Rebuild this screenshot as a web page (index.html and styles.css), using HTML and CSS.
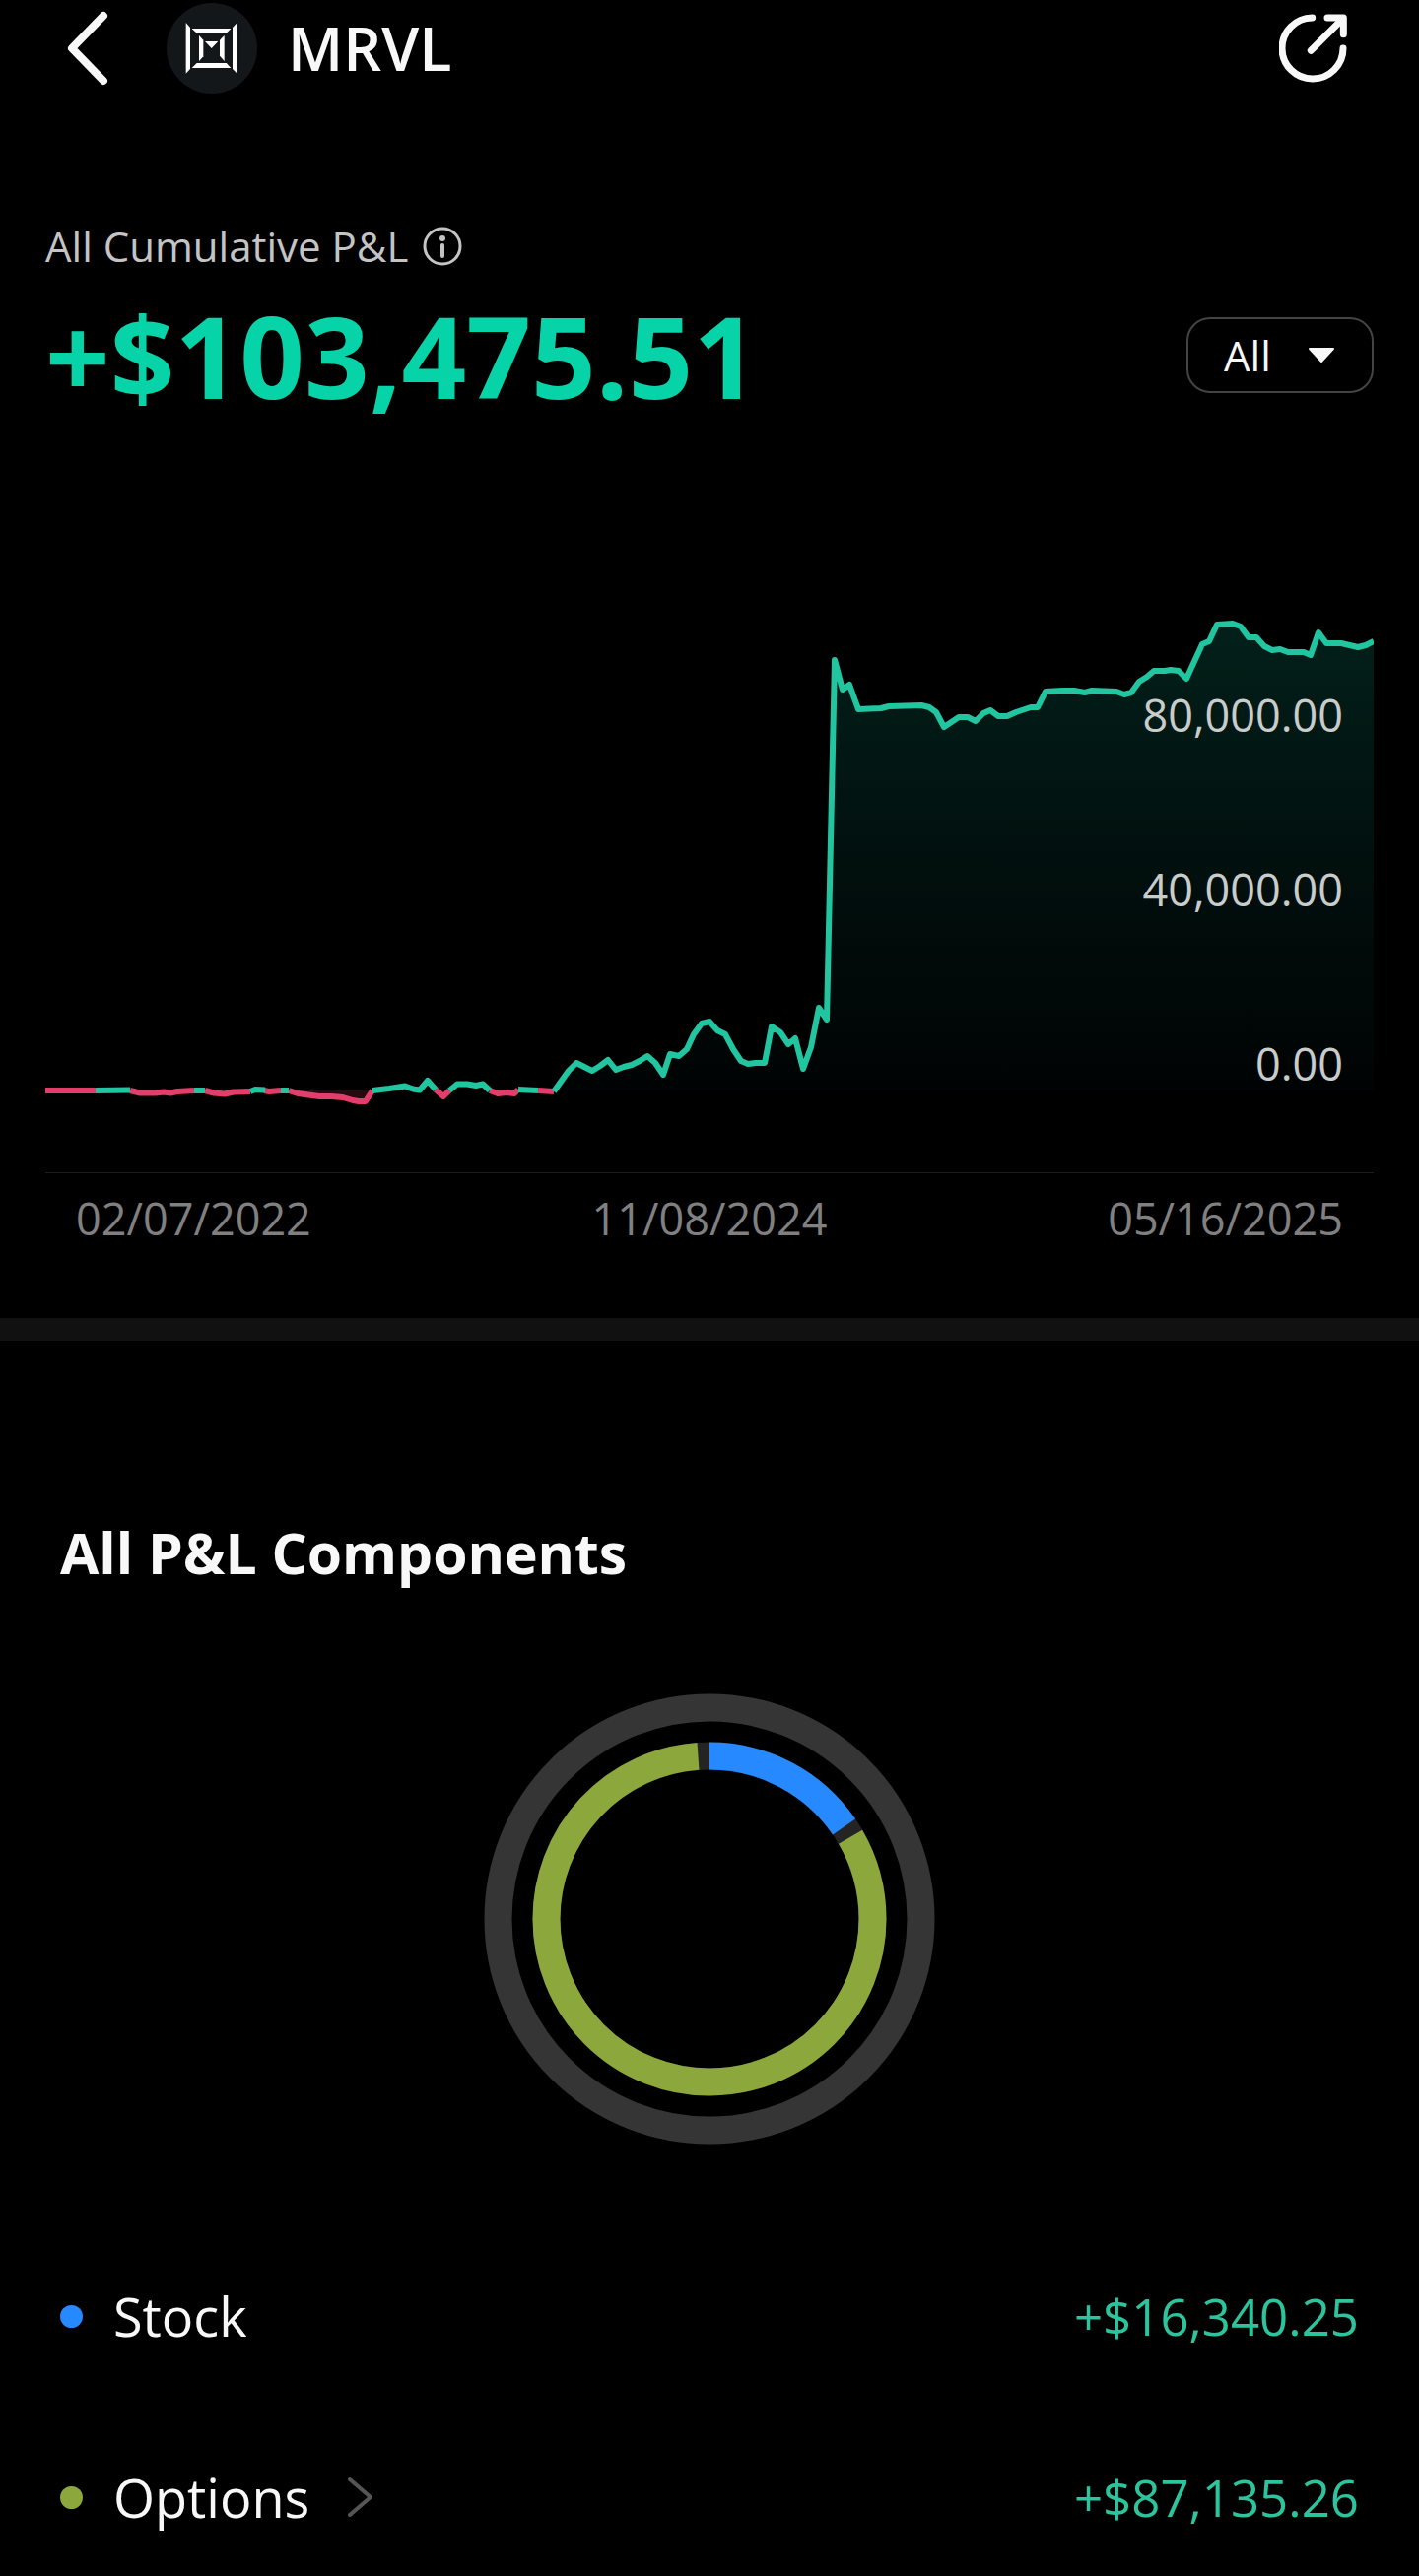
FILE: index.html
```html
<!DOCTYPE html>
<html lang="en">
<head>
    <meta charset="UTF-8">
    <meta name="viewport" content="width=device-width, initial-scale=1">
    <title>MRVL</title>
    <link rel="stylesheet" href="styles.css">
</head>
<body>
<header class="header">
    <button class="icon-btn back-btn" type="button" aria-label="Back">
        <svg class="back-icon" viewBox="0 0 42 76">
            <path d="M37 5 L5 38 L37 71"/>
        </svg>
    </button>
    <svg class="logo" viewBox="0 0 276 276" aria-hidden="true">
        <circle cx="138" cy="138" r="138" fill="#14171a"/>
        <g fill="#fff">
            <polygon points="59,60 72,75 72,201 59,215"/>
            <polygon points="215,60 201,75 201,201 215,215"/>
            <polygon points="77,78 196,78 182,92 92,92"/>
            <polygon points="92,183 182,183 196,198 77,198"/>
            <polygon points="99,99 112,113 112,163 99,177"/>
            <polygon points="176,99 162,113 162,161 176,177"/>
            <polygon points="117,117 157,117 137,138"/>
        </g>
    </svg>
    <h1 class="symbol">MRVL</h1>
    <button class="icon-btn share-btn" type="button" aria-label="Share">
        <svg class="share-icon" viewBox="0 0 210 210">
            <path d="M101 12 A93 93 0 1 0 195 105"/>
            <path d="M97 112 L190 19"/>
            <path d="M147 12 H196 V62"/>
        </svg>
    </button>
</header>

<main>
    <section class="summary">
        <div class="summary-label">
            <span>All Cumulative P&amp;L</span>
            <button class="icon-btn" type="button" aria-label="About cumulative P&amp;L">
                <svg class="info-icon" viewBox="0 0 40 40">
                    <circle cx="20" cy="20" r="18" fill="none" stroke="#c4c4c4" stroke-width="3"/>
                    <circle cx="20" cy="12" r="3" fill="#c4c4c4"/>
                    <path d="M20 19 V30" stroke="#c4c4c4" stroke-width="4" stroke-linecap="round"/>
                </svg>
            </button>
        </div>
        <div class="summary-row">
            <p class="total">+$103,475.51</p>
            <div class="range">
                <select class="range-select" aria-label="Range">
                    <option>All</option>
                </select>
                <svg class="range-arrow" viewBox="0 0 28 16" aria-hidden="true">
                    <path d="M2 1 H26 L14 14 Z"/>
                </svg>
            </div>
        </div>

        <div class="chart">
            <svg class="chart-svg" viewBox="0 0 1348 570" role="img" aria-label="Cumulative P&amp;L over time">
                <defs>
                    <linearGradient id="gain-fill" gradientUnits="userSpaceOnUse" x1="0" y1="12" x2="0" y2="487">
                        <stop offset="0" stop-color="#0fc79c" stop-opacity=".16"/>
                        <stop offset="1" stop-color="#0fa0a0" stop-opacity=".02"/>
                    </linearGradient>
                </defs>
                <!--area-->
                <path fill="url(#gain-fill)" d="M516 487 L531 467 539 459 547 463 555 467 571 456 579 466 595 461 611 452 619 459 627 471 634 450 643 452 651 445 658 430 666 419 674 417 682 426 690 430 698 445 706 457 713 460 730 459 737 422 746 428 754 440 761 434 769 465 777 443 785 403 793 415 801 50 809 80 816 75 825 100 848 99 856 97 889 96 897 98 904 103 912 118 927 108 936 108 944 112 952 104 959 101 967 107 976 107 985 103 1000 98 1007 98 1015 82 1055 83 1062 81 1087 82 1095 85 1102 83 1110 72 1118 67 1125 61 1150 61 1158 69 1174 34 1181 31 1189 14 1205 13 1213 16 1221 27 1229 27 1237 36 1245 40 1253 39 1261 42 1277 42 1284 45 1292 22 1300 33 1315 33 1332 37 1340 35 1348 31 V487 Z"/>
                <polygon fill="#e23e6b" fill-opacity=".16" points="256,487 332,487 325,498 318,498 302,494 278,493 256,490"/>
                <!--losses-->
                <g class="line line-loss">
                    <path d="M0 487 H51"/>
                    <path d="M86 487 L96 489.5 H112 L120 488.5 127 489.5 134 488 151 487"/>
                    <path d="M162 487 L171 489.5 182 490.5 191 488.5 208 488"/>
                    <path d="M222 487 L227 488 239 487"/>
                    <path d="M247 487 L256 490 278 493 290 493 302 494 312 497 318 498 325 498 332 487"/>
                    <path d="M396 486 L404 493 410 487"/>
                    <path d="M451 487 L459 490 468 489 476 490 480 486"/>
                    <path d="M500 487 L516 488"/>
                </g>
                <!--gains-->
                <g class="line line-gain">
                    <path d="M51 487 L86 486.5"/>
                    <path d="M151 487 H162"/>
                    <path d="M208 488 L213 486 223 486.5"/>
                    <path d="M239 487 H247"/>
                    <path d="M332 487 L349 485 365 482.5 373 485.5 380 486.5 388 477 396 486"/>
                    <path d="M410 487 L418 480.5 H428 L437 482 444 480.5 451 487"/>
                    <path d="M480 486 L500 487"/>
                    <path d="M516 488 L531 467 539 459 547 463 555 467 563 462 571 456 579 466 587 463 595 461 603 457 611 452 619 459 627 471 634 450 643 452 651 445 658 430 666 419 674 417 682 426 690 430 698 445 706 457 713 460 721 459 730 459 737 422 746 428 754 440 761 434 769 465 777 443 785 403 793 415 801 50 809 80 816 75 825 100 848 99 856 97 889 96 897 98 904 103 912 118 927 108 936 108 944 112 952 104 959 101 967 107 976 107 985 103 1000 98 1007 98 1015 82 1032 81 1044 81 1055 83 1062 81 1087 82 1095 85 1102 83 1110 72 1118 67 1125 61 1136 61 1142 60 1150 61 1158 69 1174 34 1181 31 1189 14 1205 13 1213 16 1221 27 1229 27 1237 36 1245 40 1253 39 1261 42 1277 42 1284 45 1292 22 1300 33 1315 33 1332 37 1340 35 1348 31"/>
                </g>
            </svg>
            <ul class="y-axis">
                <li>80,000.00</li>
                <li>40,000.00</li>
                <li>0.00</li>
            </ul>
            <ul class="x-axis">
                <li>02/07/2022</li>
                <li>11/08/2024</li>
                <li>05/16/2025</li>
            </ul>
        </div>
    </section>

    <section class="components">
        <h2 class="components-title">All P&amp;L Components</h2>
        <svg class="donut" viewBox="0 0 458 458" role="img" aria-label="Stock and options share of P&amp;L">
            <g transform="rotate(-90 229 229)" fill="none" stroke-width="28">
                <circle cx="229" cy="229" r="214.5" stroke="#353535"/>
                <circle cx="229" cy="229" r="165.5" stroke="#242424"/>
                <circle cx="229" cy="229" r="165.5" stroke="#2789ff" pathLength="360" stroke-dasharray="55.6 304.4"/>
                <circle cx="229" cy="229" r="165.5" stroke="#8ca73c" pathLength="360" stroke-dasharray="296.2 63.8" stroke-dashoffset="-59.8"/>
            </g>
        </svg>
        <ul class="component-list">
            <li class="component">
                <span class="dot dot-stock"></span>
                <span class="component-name">Stock</span>
                <span class="component-value">+$16,340.25</span>
            </li>
            <li class="component">
                <span class="dot dot-options"></span>
                <a class="component-name" href="#">Options
                    <svg class="chevron" viewBox="0 0 26 40" aria-hidden="true">
                        <path d="M2 2 L23 20 L2 38"/>
                    </svg>
                </a>
                <span class="component-value">+$87,135.26</span>
            </li>
        </ul>
    </section>
</main>
</body>
</html>
```
FILE: styles.css
```css
/*reset*/
* {
    box-sizing: border-box;
    padding: 0;
    margin: 0;
}

body {
    background-color: #000;
    color: #f8f8f8;
    font-family: "Open Sans", "Noto Sans", sans-serif;
}

svg {
    display: block;
}

li {
    list-style: none;
}

a {
    color: inherit;
    text-decoration: none;
}

.icon-btn {
    border: none;
    background: none;
    cursor: pointer;
}

/*header*/
.header {
    display: flex;
    align-items: center;
    padding: 3px 72px 3px 68px;
}

.back-btn {
    margin-right: 59px;
}

.back-icon {
    width: 42px;
    height: 76px;
}

.back-icon path,
.share-icon path {
    fill: none;
    stroke: #f8f8f8;
    stroke-linecap: round;
    stroke-linejoin: round;
}

.back-icon path {
    stroke-width: 8px;
}

.logo {
    width: 92px;
    height: 92px;
    margin-right: 31px;
}

.symbol {
    font-size: 61px;
    line-height: 80px;
    font-weight: 600;
}

.share-btn {
    margin-left: auto;
}

.share-icon {
    width: 70px;
    height: 70px;
}

.share-icon path {
    stroke-width: 21px;
}

/*summary*/
.summary {
    padding: 124px 46px 71px;
    border-bottom: 23px solid #111;
}

.summary-label {
    display: flex;
    align-items: center;
    gap: 15px;
    font-size: 42px;
    line-height: 56px;
    color: #c4c4c4;
}

.info-icon {
    width: 40px;
    height: 40px;
}

.summary-row {
    display: flex;
    align-items: center;
    justify-content: space-between;
    margin-top: 21px;
}

.total {
    padding-top: 2px;
    font-size: 115px;
    line-height: 120px;
    font-weight: 700;
    color: #06d3a7;
}

.range {
    position: relative;
}

.range-select {
    appearance: none;
    width: 190px;
    height: 77px;
    padding-left: 36px;
    border: 2px solid #444;
    border-radius: 24px;
    background: none;
    color: inherit;
    font-family: inherit;
    font-size: 42px;
}

.range-arrow {
    position: absolute;
    top: 31px;
    right: 39px;
    width: 28px;
    height: 16px;
    fill: #f8f8f8;
    stroke: #f8f8f8;
    stroke-width: 2px;
    stroke-linejoin: round;
    pointer-events: none;
}

/*chart*/
.chart {
    position: relative;
    margin-top: 199px;
    font-size: 45px;
    line-height: 60px;
}

.chart-svg {
    width: 100%;
}

.line {
    fill: none;
    stroke-width: 6px;
    stroke-linejoin: round;
}

.line-loss {
    stroke: #e23e6b;
}

.line-gain {
    stroke: #21c6a0;
}

.y-axis {
    position: absolute;
    top: 76px;
    right: 31px;
    display: flex;
    flex-direction: column;
    gap: 117px;
    text-align: right;
    color: #c8cccb;
}

.x-axis {
    display: flex;
    justify-content: space-between;
    padding: 16px 31px 0;
    border-top: 1px solid #1c1c1c;
    color: #808080;
}

/*components*/
.components {
    padding: 175px 61px 42px;
}

.components-title {
    font-size: 57px;
    line-height: 80px;
    font-weight: 700;
}

.donut {
    width: 458px;
    max-width: 100%;
    margin: 103px auto 136px;
}

.component-list {
    display: flex;
    flex-direction: column;
    gap: 108px;
}

.component {
    display: flex;
    align-items: center;
    line-height: 76px;
}

.dot {
    width: 23px;
    height: 23px;
    margin-right: 31px;
    border-radius: 50%;
}

.dot-stock {
    background-color: #2789ff;
}

.dot-options {
    background-color: #8ca73c;
}

.component-name {
    display: flex;
    align-items: center;
    gap: 39px;
    font-size: 54px;
}

.chevron {
    width: 26px;
    height: 40px;
    fill: none;
    stroke: #555;
    stroke-width: 4px;
    stroke-linecap: round;
    stroke-linejoin: round;
}

.component-value {
    margin-left: auto;
    font-size: 51px;
    color: #2bc49c;
}
```
